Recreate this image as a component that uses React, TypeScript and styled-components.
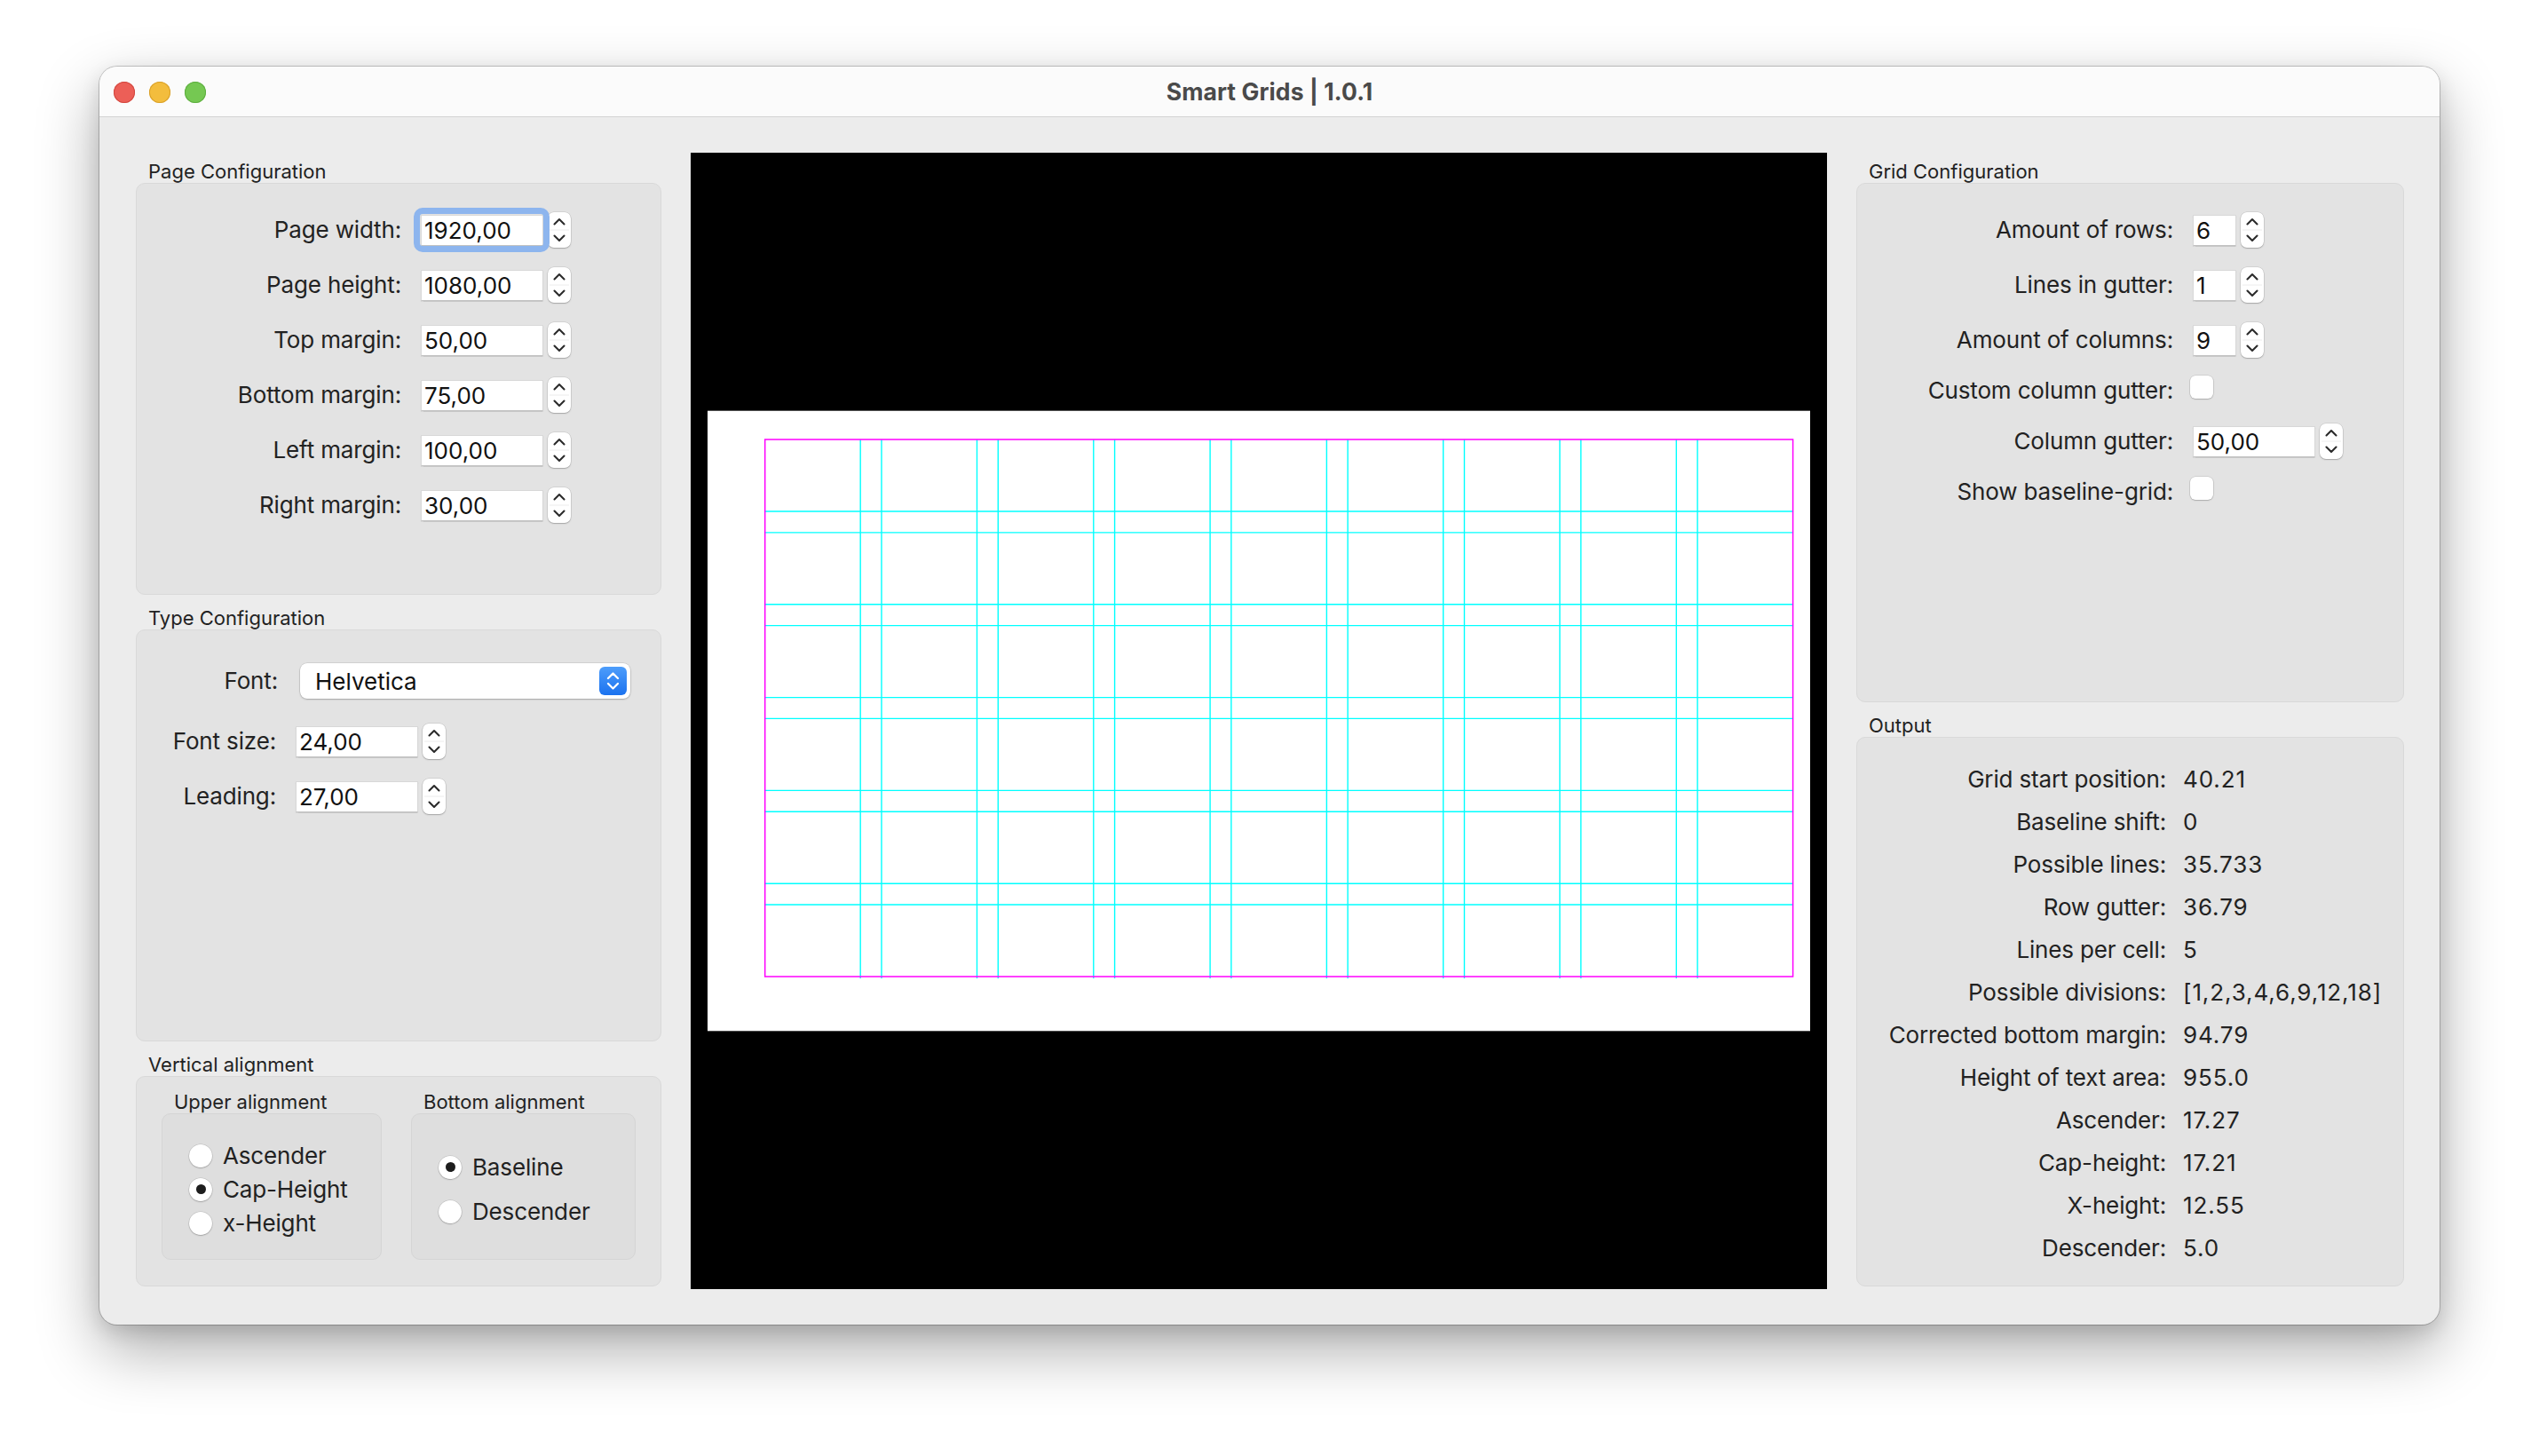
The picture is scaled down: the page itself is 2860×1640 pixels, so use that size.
import React from "react";
import styled, { createGlobalStyle } from "styled-components";

const GlobalStyle = createGlobalStyle`
  html, body { margin: 0; padding: 0; background: #ffffff; }
  body { font-family: "Inter", "Roboto", sans-serif; color: #262626; -webkit-font-smoothing: antialiased; }
  * { box-sizing: border-box; }
`;

const FONT = `"Inter", "Roboto", sans-serif`;

const Stage = styled.div`
  width: 2860px;
  height: 1640px;
  padding: 75px 0 0 112px;
  background: #ffffff;
`;

const Window = styled.div`
  width: 2636px;
  height: 1417px;
  border-radius: 20px;
  overflow: hidden;
  background: #ececec;
  box-shadow: 0 0 0 1px rgba(0, 0, 0, 0.2), 0 28px 70px rgba(0, 0, 0, 0.33), 0 8px 22px rgba(0, 0, 0, 0.12);
  display: flex;
  flex-direction: column;
`;

const TitleBar = styled.div`
  height: 57px;
  flex: none;
  background: #fbfbfb;
  border-bottom: 1px solid #d3d3d3;
  display: grid;
  grid-template-columns: 1fr auto 1fr;
  align-items: center;
`;

const Lights = styled.div`
  display: flex;
  gap: 16px;
  padding-left: 16px;
  padding-top: 1px;
`;

const Light = styled.span<{ $c: string; $b: string }>`
  width: 24px;
  height: 24px;
  border-radius: 50%;
  background: ${(p) => p.$c};
  box-shadow: inset 0 0 0 1px ${(p) => p.$b};
`;

const Title = styled.div`
  font-family: ${FONT};
  font-weight: 700;
  font-size: 26.5px;
  color: #4a4a4a;
  letter-spacing: 0.1px;
`;

const Content = styled.div`
  flex: 1;
  display: grid;
  grid-template-columns: 592px 1280px 617px;
  column-gap: 33px;
  padding: 40px 41px;
`;

const Column = styled.div`
  display: flex;
  flex-direction: column;
  gap: 5px;
  min-height: 0;
  padding-bottom: 3px;
`;

const Section = styled.section<{ $grow?: boolean; $h?: number }>`
  display: flex;
  flex-direction: column;
  ${(p) => (p.$grow ? "flex: 1;" : "")}
  ${(p) => (p.$h ? `height: ${p.$h}px; flex: none;` : "")}
`;

const GroupTitle = styled.div`
  font-family: ${FONT};
  font-size: 22px;
  line-height: 26px;
  padding: 8px 0 0 14px;
  height: 34px;
  flex: none;
  color: #222;
`;

const GroupBox = styled.div<{ $pt: number; $gap?: number }>`
  flex: 1;
  background: #e3e3e3;
  border: 1px solid #d9d9d9;
  border-radius: 10px;
  padding-top: ${(p) => p.$pt}px;
  display: flex;
  flex-direction: column;
  gap: ${(p) => p.$gap ?? 22}px;
`;

const FormRow = styled.div<{ $h?: number; $mb?: number }>`
  display: flex;
  align-items: center;
  height: ${(p) => p.$h ?? 40}px;
  ${(p) => (p.$mb ? `margin-bottom: ${p.$mb}px;` : "")}
`;

const Label = styled.div<{ $w: number; $gap?: number }>`
  width: ${(p) => p.$w}px;
  flex: none;
  text-align: right;
  font-family: ${FONT};
  font-size: 26px;
  line-height: 30px;
  color: #222;
  letter-spacing: -0.15px;
  margin-right: ${(p) => p.$gap ?? 22}px;
  white-space: nowrap;
`;

const Field = styled.span<{ $focused?: boolean }>`
  position: relative;
  display: inline-flex;
  ${(p) =>
    p.$focused
      ? `&::after {
      content: "";
      position: absolute;
      inset: -8px -7px -7px -8px;
      border: 7px solid #8db5ee;
      border-radius: 10px;
      pointer-events: none;
    }`
      : ""}
`;

const NumInput = styled.input<{ $w: number }>`
  width: ${(p) => p.$w}px;
  height: 35px;
  font-family: ${FONT};
  font-size: 26px;
  color: #111;
  background: #ffffff;
  border: 1px solid #d8d8d8;
  border-bottom-color: #c2c2c2;
  border-radius: 0;
  padding: 0 3px;
  outline: none;
  box-shadow: 0 0.5px 1px rgba(0, 0, 0, 0.12);
`;

const StepperBox = styled.span`
  width: 26px;
  height: 40px;
  margin-left: 5px;
  flex: none;
  border-radius: 7px;
  background: #ffffff;
  box-shadow: 0 0 0 0.5px rgba(0, 0, 0, 0.14), 0 1px 1.5px rgba(0, 0, 0, 0.22);
  display: block;
`;

const Stepper = () => (
  <StepperBox>
    <svg width="26" height="40" viewBox="0 0 26 40">
      <line x1="2" y1="20" x2="24" y2="20" stroke="#ececec" strokeWidth="1" />
      <path d="M7.5 13.5 L13 8 L18.5 13.5" fill="none" stroke="#2b2b2b" strokeWidth="2.1" strokeLinecap="round" strokeLinejoin="round" />
      <path d="M7.5 26.5 L13 32 L18.5 26.5" fill="none" stroke="#2b2b2b" strokeWidth="2.1" strokeLinecap="round" strokeLinejoin="round" />
    </svg>
  </StepperBox>
);

const Popup = styled.div`
  width: 372px;
  height: 40px;
  margin-left: 3px;
  background: #ffffff;
  border-radius: 8px;
  box-shadow: 0 0 0 0.5px rgba(0, 0, 0, 0.14), 0 1px 2px rgba(0, 0, 0, 0.22);
  display: flex;
  align-items: center;
  justify-content: space-between;
  padding: 0 4px 0 17px;
  font-family: ${FONT};
  font-size: 26px;
  color: #111;
`;

const PopupArrows = styled.span`
  width: 31px;
  height: 32px;
  border-radius: 6px;
  background: linear-gradient(#4d9dfb, #1b72ef);
  display: block;
`;

const Checkbox = styled.span`
  width: 26px;
  height: 26px;
  border-radius: 6px;
  background: #ffffff;
  box-shadow: 0 0 0 0.5px rgba(0, 0, 0, 0.16), 0 1px 1.5px rgba(0, 0, 0, 0.18);
  align-self: flex-start;
  margin-top: -2px;
  flex: none;
`;

const AlignBody = styled.div`
  flex: 1;
  background: #e3e3e3;
  border: 1px solid #d9d9d9;
  border-radius: 10px;
  padding: 15px 0 0 28px;
  display: flex;
  gap: 33px;
`;

const SubColumn = styled.div<{ $w: number }>`
  width: ${(p) => p.$w}px;
  display: flex;
  flex-direction: column;
`;

const SubTitle = styled.div`
  font-family: ${FONT};
  font-size: 22px;
  line-height: 26px;
  padding-left: 14px;
  color: #222;
`;

const SubBox = styled.div<{ $gap: number }>`
  height: 165px;
  background: #dedede;
  border: 1px solid #d5d5d5;
  border-radius: 10px;
  display: flex;
  flex-direction: column;
  justify-content: center;
  gap: ${(p) => p.$gap}px;
  padding: 6px 0 0 30px;
`;

const RadioItem = styled.div`
  display: flex;
  align-items: center;
  height: 32px;
  gap: 12px;
  font-family: ${FONT};
  font-size: 26px;
  letter-spacing: -0.15px;
  color: #222;
`;

const RadioCircle = styled.span<{ $on?: boolean }>`
  width: 26px;
  height: 26px;
  border-radius: 50%;
  background: #ffffff;
  box-shadow: 0 0 0 0.5px rgba(0, 0, 0, 0.16), 0 1px 1.5px rgba(0, 0, 0, 0.2);
  display: flex;
  align-items: center;
  justify-content: center;
  flex: none;
  &::after {
    content: "";
    width: 11px;
    height: 11px;
    border-radius: 50%;
    background: ${(p) => (p.$on ? "#1d1d1d" : "transparent")};
  }
`;

const OutputRow = styled.div`
  display: flex;
  height: 48px;
  align-items: center;
  font-family: ${FONT};
  font-size: 26px;
  color: #222;
`;

const OutLabel = styled.div`
  width: 348px;
  text-align: right;
  margin-right: 19px;
  white-space: nowrap;
  letter-spacing: -0.15px;
`;

const OutValue = styled.div`
  white-space: nowrap;
  letter-spacing: 0.9px;
`;

const Canvas = styled.div`
  width: 1280px;
  height: 1280px;
  background: #000000;
`;

function GridPreview() {
  const s = 1242 / 1920;
  const ox = (1280 - 1920 * s) / 2;
  const oy = (1280 - 1080 * s) / 2;
  const m = { top: 50, left: 100, right: 30, bottom: 94.79 };
  const g = 36.79;
  const rows = 6;
  const cols = 9;
  const textW = 1920 - m.left - m.right;
  const textH = 1080 - m.top - m.bottom;
  const rh = (textH - (rows - 1) * g) / rows;
  const cw = (textW - (cols - 1) * g) / cols;
  const L = ox + m.left * s;
  const T = oy + m.top * s;
  const R = ox + (1920 - m.right) * s;
  const B = oy + (1080 - m.bottom) * s;
  const hl: number[] = [];
  for (let i = 1; i < rows; i++) {
    const y1 = T + (i * rh + (i - 1) * g) * s;
    hl.push(y1, y1 + g * s);
  }
  const vl: number[] = [];
  for (let i = 1; i < cols; i++) {
    const x1 = L + (i * cw + (i - 1) * g) * s;
    vl.push(x1, x1 + g * s);
  }
  return (
    <svg width="1280" height="1280" viewBox="0 0 1280 1280">
      <rect x={ox} y={oy} width={1920 * s} height={1080 * s} fill="#ffffff" />
      {hl.map((y, i) => (
        <line key={"h" + i} x1={L} x2={R} y1={y} y2={y} stroke="#00ffff" strokeWidth="1.4" />
      ))}
      {vl.map((x, i) => (
        <line key={"v" + i} x1={x} x2={x} y1={T} y2={B + 2} stroke="#00ffff" strokeWidth="1.4" />
      ))}
      <rect x={L} y={T} width={R - L} height={B - T} fill="none" stroke="#ff00ff" strokeWidth="1.5" />
    </svg>
  );
}

const pageRows = [
  ["Page width:", "1920,00"],
  ["Page height:", "1080,00"],
  ["Top margin:", "50,00"],
  ["Bottom margin:", "75,00"],
  ["Left margin:", "100,00"],
  ["Right margin:", "30,00"],
];

const outputs = [
  ["Grid start position:", "40.21"],
  ["Baseline shift:", "0"],
  ["Possible lines:", "35.733"],
  ["Row gutter:", "36.79"],
  ["Lines per cell:", "5"],
  ["Possible divisions:", "[1,2,3,4,6,9,12,18]"],
  ["Corrected bottom margin:", "94.79"],
  ["Height of text area:", "955.0"],
  ["Ascender:", "17.27"],
  ["Cap-height:", "17.21"],
  ["X-height:", "12.55"],
  ["Descender:", "5.0"],
];

export default function App() {
  return (
    <Stage>
      <GlobalStyle />
      <Window>
        <TitleBar>
          <Lights>
            <Light $c="#ec5f57" $b="#d2473f" />
            <Light $c="#f3bd3d" $b="#d9a02b" />
            <Light $c="#75c852" $b="#5eae40" />
          </Lights>
          <Title>Smart Grids | 1.0.1</Title>
          <div />
        </TitleBar>
        <Content>
          <Column>
            <Section $grow>
              <GroupTitle>Page Configuration</GroupTitle>
              <GroupBox $pt={32}>
                {pageRows.map(([l, v], i) => (
                  <FormRow key={l}>
                    <Label $w={298}>{l}</Label>
                    <Field $focused={i === 0}>
                      <NumInput $w={138} readOnly value={v} />
                    </Field>
                    <Stepper />
                  </FormRow>
                ))}
              </GroupBox>
            </Section>
            <Section $grow>
              <GroupTitle>Type Configuration</GroupTitle>
              <GroupBox $pt={37}>
                <FormRow $mb={6}>
                  <Label $w={159}>Font:</Label>
                  <Popup>
                    Helvetica
                    <PopupArrows>
                      <svg width="31" height="32" viewBox="0 0 31 32">
                        <path d="M10 13 L15.5 7.5 L21 13" fill="none" stroke="#fff" strokeWidth="2.3" strokeLinecap="round" strokeLinejoin="round" />
                        <path d="M10 19 L15.5 24.5 L21 19" fill="none" stroke="#fff" strokeWidth="2.3" strokeLinecap="round" strokeLinejoin="round" />
                      </svg>
                    </PopupArrows>
                  </Popup>
                </FormRow>
                <FormRow>
                  <Label $w={157}>Font size:</Label>
                  <Field>
                    <NumInput $w={138} readOnly value="24,00" />
                  </Field>
                  <Stepper />
                </FormRow>
                <FormRow>
                  <Label $w={157}>Leading:</Label>
                  <Field>
                    <NumInput $w={138} readOnly value="27,00" />
                  </Field>
                  <Stepper />
                </FormRow>
              </GroupBox>
            </Section>
            <Section $h={271}>
              <GroupTitle>Vertical alignment</GroupTitle>
              <AlignBody>
                <SubColumn $w={248}>
                  <SubTitle>Upper alignment</SubTitle>
                  <SubBox $gap={6}>
                    <RadioItem>
                      <RadioCircle />
                      Ascender
                    </RadioItem>
                    <RadioItem>
                      <RadioCircle $on />
                      Cap-Height
                    </RadioItem>
                    <RadioItem>
                      <RadioCircle />
                      x-Height
                    </RadioItem>
                  </SubBox>
                </SubColumn>
                <SubColumn $w={253}>
                  <SubTitle>Bottom alignment</SubTitle>
                  <SubBox $gap={18}>
                    <RadioItem>
                      <RadioCircle $on />
                      Baseline
                    </RadioItem>
                    <RadioItem>
                      <RadioCircle />
                      Descender
                    </RadioItem>
                  </SubBox>
                </SubColumn>
              </AlignBody>
            </Section>
          </Column>

          <Canvas>
            <GridPreview />
          </Canvas>

          <Column>
            <Section $h={619}>
              <GroupTitle>Grid Configuration</GroupTitle>
              <GroupBox $pt={32}>
                <FormRow>
                  <Label $w={356}>Amount of rows:</Label>
                  <Field>
                    <NumInput $w={49} readOnly value="6" />
                  </Field>
                  <Stepper />
                </FormRow>
                <FormRow>
                  <Label $w={356}>Lines in gutter:</Label>
                  <Field>
                    <NumInput $w={49} readOnly value="1" />
                  </Field>
                  <Stepper />
                </FormRow>
                <FormRow>
                  <Label $w={356}>Amount of columns:</Label>
                  <Field>
                    <NumInput $w={49} readOnly value="9" />
                  </Field>
                  <Stepper />
                </FormRow>
                <FormRow $h={30}>
                  <Label $w={356} $gap={19}>Custom column gutter:</Label>
                  <Checkbox />
                </FormRow>
                <FormRow>
                  <Label $w={356}>Column gutter:</Label>
                  <Field>
                    <NumInput $w={138} readOnly value="50,00" />
                  </Field>
                  <Stepper />
                </FormRow>
                <FormRow $h={30}>
                  <Label $w={356} $gap={19}>Show baseline-grid:</Label>
                  <Checkbox />
                </FormRow>
              </GroupBox>
            </Section>
            <Section $grow>
              <GroupTitle>Output</GroupTitle>
              <GroupBox $pt={22} $gap={0}>
                {outputs.map(([l, v]) => (
                  <OutputRow key={l}>
                    <OutLabel>{l}</OutLabel>
                    <OutValue>{v}</OutValue>
                  </OutputRow>
                ))}
              </GroupBox>
            </Section>
          </Column>
        </Content>
      </Window>
    </Stage>
  );
}
